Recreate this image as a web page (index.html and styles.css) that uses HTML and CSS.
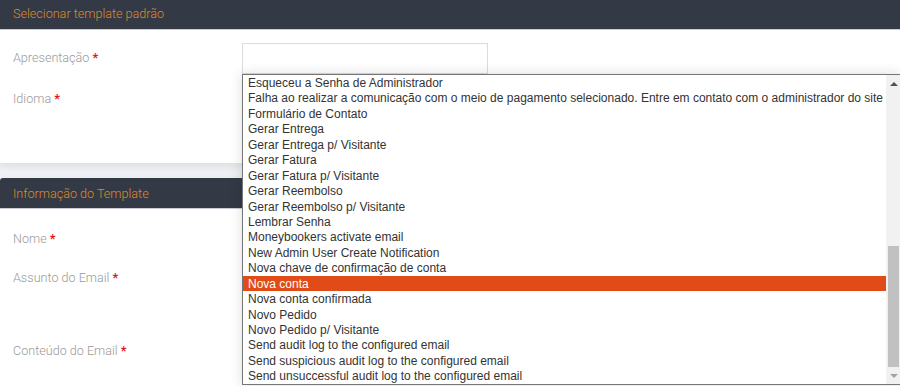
FILE: index.html
```html
<!DOCTYPE html>
<html lang="pt-BR">
<head>
    <meta charset="UTF-8">
    <meta name="viewport" content="width=device-width, initial-scale=1.0">
    <title>Templates de Email</title>
    <link rel="stylesheet" href="styles.css">
</head>
<body>
    <section class="panel panel-default">
        <div class="panel-head">Selecionar template padrão</div>
        <div class="panel-body">
            <div class="field">
                <label>Apresentação <span class="req">*</span></label>
                <div class="input"></div>
            </div>
            <div class="field">
                <label>Idioma <span class="req">*</span></label>
                <div class="input"></div>
            </div>

            <!-- open listbox of the Apresentação select -->
            <div class="listbox">
                <ul class="options">
                    <li>Esqueceu a Senha de Administrador</li>
                    <li>Falha ao realizar a comunicação com o meio de pagamento selecionado. Entre em contato com o administrador do site</li>
                    <li>Formulário de Contato</li>
                    <li>Gerar Entrega</li>
                    <li>Gerar Entrega p/ Visitante</li>
                    <li>Gerar Fatura</li>
                    <li>Gerar Fatura p/ Visitante</li>
                    <li>Gerar Reembolso</li>
                    <li>Gerar Reembolso p/ Visitante</li>
                    <li>Lembrar Senha</li>
                    <li>Moneybookers activate email</li>
                    <li>New Admin User Create Notification</li>
                    <li>Nova chave de confirmação de conta</li>
                    <li class="selected">Nova conta</li>
                    <li>Nova conta confirmada</li>
                    <li>Novo Pedido</li>
                    <li>Novo Pedido p/ Visitante</li>
                    <li>Send audit log to the configured email</li>
                    <li>Send suspicious audit log to the configured email</li>
                    <li>Send unsuccessful audit log to the configured email</li>
                </ul>
                <div class="scrollbar">
                    <span class="arrow up"></span>
                    <div class="track"><div class="thumb"></div></div>
                    <span class="arrow down"></span>
                </div>
            </div>
        </div>
    </section>

    <section class="panel panel-info">
        <div class="panel-head">Informação do Template</div>
        <div class="panel-body">
            <div class="field">
                <label>Nome <span class="req">*</span></label>
                <div class="input"></div>
            </div>
            <div class="field tall">
                <label>Assunto do Email <span class="req">*</span></label>
                <div class="input"></div>
            </div>
            <div class="field">
                <label>Conteúdo do Email <span class="req">*</span></label>
                <div class="input"></div>
            </div>
        </div>
    </section>
</body>
</html>
```

FILE: styles.css
```css
/* General body styling */
body {
    font-family: Roboto, "Noto Sans", sans-serif;
    font-size: 12.6px;
    font-weight: 300;
    margin: 0;
    padding: 0;
    background-color: #eef0f3;
}

/* Panels */
.panel {
    background-color: #ffffff;
    box-shadow: 0 3px 8px rgba(0, 0, 0, 0.08);
}

.panel-default {
    position: relative;
    height: 163px;
}

.panel-info {
    margin-top: 15px;
    border-radius: 3px 3px 0 0;
    position: relative;
    z-index: 0;
}

.panel-head {
    background-color: #333a46;
    color: #de8a2a;
    height: 29px;
    line-height: 28px;
    padding: 0 13px;
    border-bottom: 1px solid #c8ccd2;
}

.panel-info .panel-head {
    height: 30px;
    line-height: 31px;
    border-radius: 3px 3px 0 0;
}

.panel-body {
    padding: 12px 0 0 13px;
}

.panel-info .panel-body {
    padding-top: 14px;
    height: 174px;
}

/* Form rows */
.field {
    display: grid;
    grid-template-columns: 229px 246px;
    margin-bottom: 9px;
}

.panel-info .field {
    margin-bottom: 8px;
}

.field.tall {
    min-height: 65px;
}

.field label {
    color: #9a9a9a;
    line-height: 31px;
}

.req {
    color: #e3161b;
    font-weight: bold;
}

.input {
    height: 29px;
    border: 1px solid #dcdcdc;
    background-color: #ffffff;
}

.panel-default .input {
    margin-top: 1px;
}

/* Open listbox */
.listbox {
    position: absolute;
    left: 242px;
    top: 74px;
    width: 658px;
    height: 309px;
    display: flex;
    background-color: #ffffff;
    border: 1px solid #767676;
    border-right: none;
    box-shadow: 0 0 12px rgba(0, 0, 0, 0.14);
    z-index: 5;
    font-family: "Liberation Sans", Arial, sans-serif;
    font-size: 12px;
    font-weight: normal;
}

.options {
    list-style: none;
    margin: 0;
    padding: 0;
    flex: 1;
    min-width: 0;
    overflow: hidden;
}

.options li {
    height: 15.45px;
    line-height: 16px;
    padding-left: 5px;
    color: #333333;
    white-space: nowrap;
}

.options li.selected {
    background-color: #e04b17;
    color: #ffffff;
}

/* Scrollbar */
.scrollbar {
    width: 15px;
    background-color: #f1f1f1;
    display: flex;
    flex-direction: column;
    align-items: center;
}

.arrow {
    width: 0;
    height: 0;
    border-left: 4px solid transparent;
    border-right: 4px solid transparent;
    margin: 7px 0 6px;
}

.arrow.up {
    border-bottom: 4px solid #505050;
}

.arrow.down {
    border-top: 4px solid #a3a3a3;
}

.track {
    flex: 1;
    width: 100%;
    display: flex;
    flex-direction: column;
    justify-content: flex-end;
    padding: 0 2px;
    box-sizing: border-box;
}

.thumb {
    height: 121px;
    background-color: #c1c1c1;
}
```
